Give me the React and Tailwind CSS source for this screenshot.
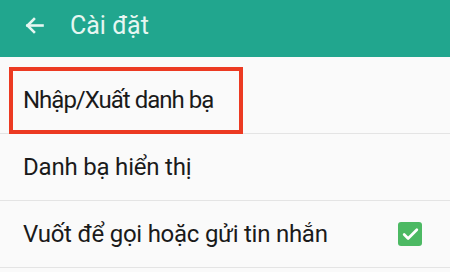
import { Check } from "lucide-react";

const rows = [
  { label: "Nhập/Xuất danh bạ", highlight: true, text: "tracking-[-1px]" },
  { label: "Danh bạ hiển thị", text: "tracking-[-0.2px]" },
  { label: "Vuốt để gọi hoặc gửi tin nhắn", checked: true, text: "tracking-[-0.25px]" },
];

const App = () => {
  return (
    <div className="w-[450px] h-[272px] overflow-hidden bg-[#fafafa] font-['Roboto',sans-serif]">
      {/* HEADER */}
      <div className="h-[57px] bg-[#21a68e] flex items-center text-[#e6f6f1]">
        <div className="w-[70px] flex items-center pl-[25px] -mt-[6px]">
          <svg width="19" height="17" viewBox="0 0 19 17" fill="none" stroke="currentColor" strokeWidth="2.6" strokeLinecap="square">
            <path d="M2.5 8.5h15" />
            <path d="M9 2L2.5 8.5 9 15" />
          </svg>
        </div>
        <span className="text-[25px] leading-none -mt-[7px]">Cài đặt</span>
      </div>

      {/* LIST */}
      <div className="pt-[10px]">
        {rows.map((row) => (
          <div key={row.label} className="h-[67px] border-b border-[#e4e4e4] flex items-center">
            <div
              className={`h-[67px] ml-[9px] flex items-center pl-[10px] border-[4px] ${
                row.highlight ? "border-[#ec3a22] w-[234px]" : "border-transparent"
              }`}
            >
              <span className={`text-[24px] text-[#1a1a1a] whitespace-nowrap ${row.text}`}>{row.label}</span>
            </div>
            {row.checked && (
              <div className="ml-auto mr-[28px] w-[24px] h-[24px] rounded-[3px] bg-[#4cb963] flex items-center justify-center">
                <Check size={19} strokeWidth={3.4} color="white" />
              </div>
            )}
          </div>
        ))}
      </div>
    </div>
  );
};

export default App;
